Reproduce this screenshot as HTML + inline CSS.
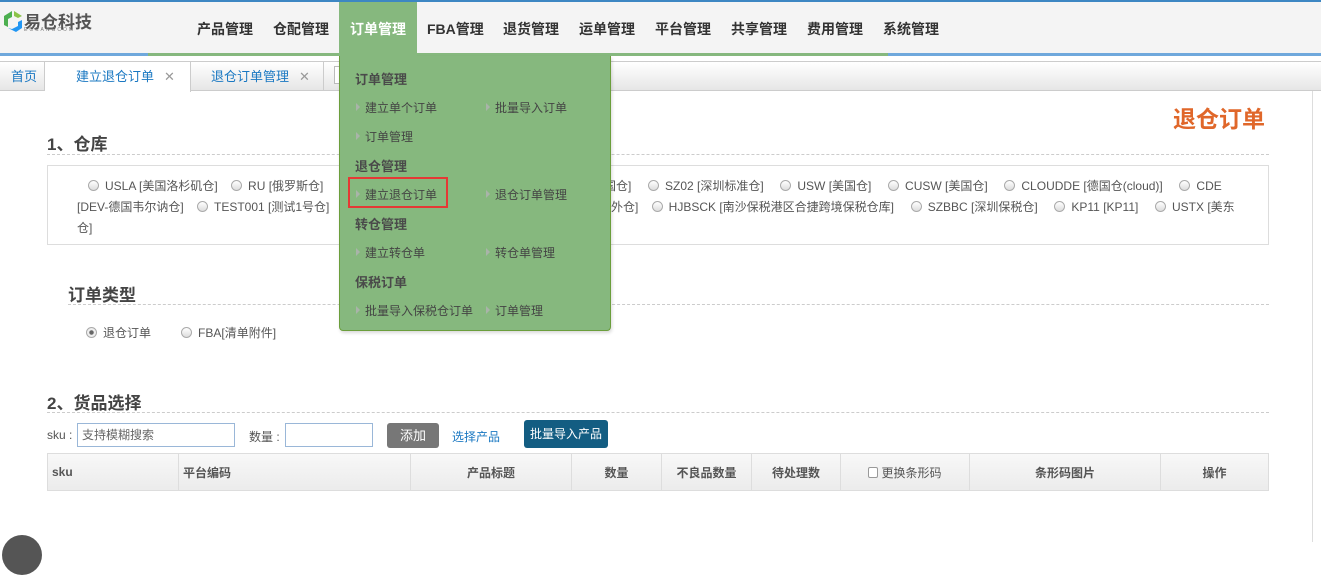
<!DOCTYPE html>
<html><head><meta charset="utf-8"><style>
*{margin:0;padding:0;box-sizing:border-box}
body{width:1321px;height:542px;overflow:hidden;background:#fff;font-family:"Liberation Sans","Noto Sans CJK SC",sans-serif;font-size:12px;color:#555;position:relative}
.abs{position:absolute}
#top{left:0;top:0;width:1321px;height:2px;background:#3d87c3}
#nav{left:0;top:2px;width:1321px;height:51px;background:#f4f4f4}
.line{top:53px;height:3px}
.nv{top:2px;height:51px;line-height:54px;font-size:14px;font-weight:bold;color:#333}
#act{left:339px;top:2px;width:78px;height:54px;background:#86b87e;color:#fff;text-align:center;line-height:54px;font-size:14px;font-weight:bold;z-index:11}
#tabs{left:0;top:61px;width:1321px;height:30px;border-top:1px solid #ccc;border-bottom:1px solid #ccc;background:linear-gradient(#fff,#e6e6e6)}
.tab{top:62px;height:29px;line-height:30px;font-size:13px;color:#1a78c2;border-right:1px solid #ccc;padding-left:11px}
.x{color:#999;margin-left:10px;font-size:13px}
#dd{left:339px;top:56px;width:272px;height:275px;background:#86b87e;border:1px solid #6b9e3c;border-top:none;border-radius:0 0 4px 4px;box-shadow:1px 2px 3px rgba(0,0,0,.15);z-index:10}
.dh{font-size:13px;color:#4a4a4a;font-weight:bold}
.di{font-size:12px;color:#444}
.tri{position:absolute;width:0;height:0;border-left:4px solid #a9b4a9;border-top:4px solid transparent;border-bottom:4px solid transparent}
h2{position:absolute;font-size:17px;color:#444;font-weight:bold}
.dash{height:0;border-top:1px dashed #ccc;left:47px;width:1222px}
.r{display:inline-block;width:11px;height:11px;border-radius:50%;border:1px solid #aaa;background:linear-gradient(#fff,#ddd);vertical-align:-1px;margin-right:6px}
.row{left:47px;font-size:12px;color:#555;white-space:nowrap}
th{font-weight:bold;color:#555;font-size:12px;border-right:1px solid #ddd;height:37px}
</style></head><body>
<div id="top" class="abs"></div>
<div id="nav" class="abs"></div>
<div class="abs line" style="left:0;width:148px;background:#6fa8dc"></div>
<div class="abs line" style="left:148px;width:740px;background:#86b87e"></div>
<div class="abs line" style="left:888px;width:433px;background:#6fa8dc"></div>
<div class="abs" style="left:2px;top:8px;width:22px;height:26px">
<svg width="22" height="26" viewBox="0 0 22 26"><path d="M2 8 L10 3 L10 9 L6 11 L6 19 L2 17Z" fill="#4caf50"/><path d="M12 3 L20 8 L16 10 L12 8Z" fill="#8bc34a"/><path d="M6 20 L14 24 L20 20 L20 12 L16 14 L16 18 L10 21Z" fill="#2196f3"/></svg></div>
<div class="abs" style="left:24px;top:8px;font-size:17px;color:#555;font-weight:bold">易仓科技</div>
<div class="abs" style="left:24px;top:27px;font-size:5px;color:#777;letter-spacing:2px">ECCANGCOM</div>
<div class="abs nv" style="left:197px">产品管理</div>
<div class="abs nv" style="left:273px">仓配管理</div>
<div id="act" class="abs">订单管理</div>
<div class="abs nv" style="left:427px">FBA管理</div>
<div class="abs nv" style="left:503px">退货管理</div>
<div class="abs nv" style="left:579px">运单管理</div>
<div class="abs nv" style="left:655px">平台管理</div>
<div class="abs nv" style="left:731px">共享管理</div>
<div class="abs nv" style="left:807px">费用管理</div>
<div class="abs nv" style="left:883px">系统管理</div>
<div id="tabs" class="abs"></div>
<div class="abs tab" style="left:0;width:45px">首页</div>
<div class="abs tab" style="left:45px;width:146px;background:#fff;padding-left:31px;height:30px">建立退仓订单<span class="x">✕</span></div>
<div class="abs tab" style="left:191px;width:133px;padding-left:20px">退仓订单管理<span class="x">✕</span></div>
<div class="abs" style="left:334px;top:66px;width:8px;height:18px;border:1px solid #bbb;background:#fff"></div>
<div id="dd" class="abs">
<div class="abs dh" style="left:15px;top:13px">订单管理</div>
<div class="tri" style="left:16px;top:47px"></div><div class="abs di" style="left:25px;top:43px">建立单个订单</div>
<div class="tri" style="left:146px;top:47px"></div><div class="abs di" style="left:155px;top:43px">批量导入订单</div>
<div class="tri" style="left:16px;top:76px"></div><div class="abs di" style="left:25px;top:72px">订单管理</div>
<div class="abs dh" style="left:15px;top:100px">退仓管理</div>
<div class="abs" style="left:8px;top:121px;width:100px;height:31px;border:2px solid #e53935"></div>
<div class="tri" style="left:16px;top:134px"></div><div class="abs di" style="left:25px;top:130px">建立退仓订单</div>
<div class="tri" style="left:146px;top:134px"></div><div class="abs di" style="left:155px;top:130px">退仓订单管理</div>
<div class="abs dh" style="left:15px;top:158px">转仓管理</div>
<div class="tri" style="left:16px;top:192px"></div><div class="abs di" style="left:25px;top:188px">建立转仓单</div>
<div class="tri" style="left:146px;top:192px"></div><div class="abs di" style="left:155px;top:188px">转仓单管理</div>
<div class="abs dh" style="left:15px;top:216px">保税订单</div>
<div class="tri" style="left:16px;top:250px"></div><div class="abs di" style="left:25px;top:246px">批量导入保税仓订单</div>
<div class="tri" style="left:146px;top:250px"></div><div class="abs di" style="left:155px;top:246px">订单管理</div>
</div>
<div class="abs" style="left:1173px;top:100px;font-size:23px;font-weight:bold;color:#e0672a">退仓订单</div>
<div class="abs" style="left:1312px;top:91px;width:1px;height:451px;background:#ddd"></div>
<h2 style="left:47px;top:130px">1、仓库</h2>
<div class="abs dash" style="top:154px"></div>
<div class="abs" style="left:47px;top:165px;width:1222px;height:80px;border:1px solid #ddd"></div>
<div class="abs row" style="left:88px;top:177px"><span class="r"></span>USLA [美国洛杉矶仓]&nbsp;&nbsp;&nbsp; <span class="r"></span>RU [俄罗斯仓]</div>
<div class="abs row" style="left:604px;top:177px">国仓]&nbsp;&nbsp;&nbsp;&nbsp; <span class="r"></span>SZ02 [深圳标准仓]&nbsp;&nbsp;&nbsp;&nbsp; <span class="r"></span>USW [美国仓]&nbsp;&nbsp;&nbsp;&nbsp; <span class="r"></span>CUSW [美国仓]&nbsp;&nbsp;&nbsp;&nbsp; <span class="r"></span>CLOUDDE [德国仓(cloud)]&nbsp;&nbsp;&nbsp;&nbsp; <span class="r"></span>CDE</div>
<div class="abs row" style="left:77px;top:198px">[DEV-德国韦尔讷仓]&nbsp;&nbsp;&nbsp; <span class="r"></span>TEST001 [测试1号仓]</div>
<div class="abs row" style="left:611px;top:198px">外仓]&nbsp;&nbsp;&nbsp; <span class="r"></span>HJBSCK [南沙保税港区合捷跨境保税仓库]&nbsp;&nbsp;&nbsp;&nbsp; <span class="r"></span>SZBBC [深圳保税仓]&nbsp;&nbsp;&nbsp;&nbsp; <span class="r"></span>KP11 [KP11]&nbsp;&nbsp;&nbsp;&nbsp; <span class="r"></span>USTX [美东</div>
<div class="abs row" style="left:77px;top:219px">仓]</div>
<h2 style="left:68px;top:281px">订单类型</h2>
<div class="abs dash" style="top:304px;left:68px;width:1201px"></div>
<div class="abs row" style="left:86px;top:324px"><span class="r" style="background:radial-gradient(#666 30%,#eee 40%)"></span>退仓订单 &nbsp;&nbsp;&nbsp;&nbsp;&nbsp;&nbsp;&nbsp;&nbsp;<span class="r"></span>FBA[清单附件]</div>
<h2 style="left:47px;top:389px">2、货品选择</h2>
<div class="abs dash" style="top:412px"></div>
<div class="abs row" style="left:47px;top:428px">sku :</div>
<div class="abs" style="left:77px;top:423px;width:158px;height:24px;border:1px solid #9ab7d8;padding-left:4px;line-height:22px;font-size:12px;color:#666">支持模糊搜索</div>
<div class="abs row" style="left:249px;top:428px">数量 :</div>
<div class="abs" style="left:285px;top:423px;width:88px;height:24px;border:1px solid #9ab7d8"></div>
<div class="abs" style="left:387px;top:423px;width:52px;height:25px;background:#777;border-radius:3px;color:#fff;text-align:center;line-height:25px;font-size:13px">添加</div>
<div class="abs" style="left:452px;top:428px;color:#1a78c2">选择产品</div>
<div class="abs" style="left:524px;top:420px;width:84px;height:28px;background:#135d82;border-radius:3px;color:#fff;text-align:center;line-height:28px;font-size:12px">批量导入产品</div>
<table class="abs" style="left:47px;top:453px;width:1222px;border-collapse:collapse;border:1px solid #ddd;background:linear-gradient(#f8f8f8,#ebebeb)">
<tr><th style="width:131px;text-align:left;padding-left:4px">sku</th><th style="width:232px;text-align:left;padding-left:4px">平台编码</th><th style="width:161px">产品标题</th><th style="width:90px">数量</th><th style="width:90px">不良品数量</th><th style="width:89px">待处理数</th><th style="width:129px;font-weight:normal"><span style="display:inline-block;width:10px;height:11px;border:1px solid #999;border-radius:2px;vertical-align:-1px;margin-right:3px;background:#fff"></span>更换条形码</th><th style="width:191px">条形码图片</th><th style="border-right:none">操作</th></tr>
</table>
<div class="abs" style="left:2px;top:535px;width:40px;height:40px;border-radius:50%;background:#555"></div>
</body></html>
